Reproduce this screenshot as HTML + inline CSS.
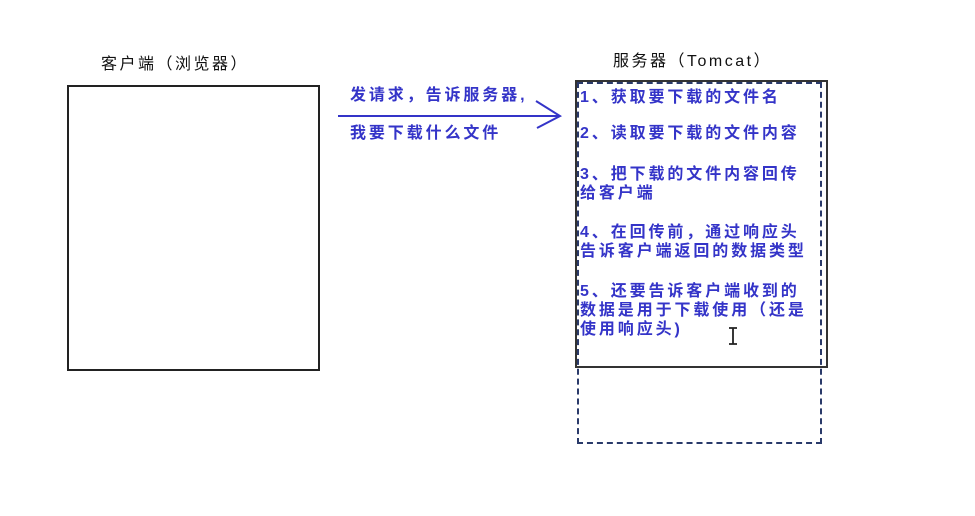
<!DOCTYPE html>
<html><head><meta charset="utf-8"><style>
body{margin:0;width:975px;height:516px;background:#fff;position:relative;overflow:hidden;font-family:"Liberation Sans","Noto Sans CJK SC",sans-serif}
div{box-sizing:border-box}
.a{position:absolute;white-space:nowrap;line-height:19px}
.b{color:#3434c8;font-size:16px;letter-spacing:2.9px;font-weight:bold}
.k{color:#111;font-size:16px;letter-spacing:2.5px}
</style></head><body>
<div class="a k" style="left:101px;top:55px">客户端（浏览器）</div>
<div class="a k" style="left:613px;top:52px">服务器（Tomcat）</div>
<div style="position:absolute;left:67px;top:85px;width:253px;height:286px;border:2px solid #222"></div>
<div style="position:absolute;left:575px;top:80px;width:253px;height:288px;border:2px solid #333"></div>
<div style="position:absolute;left:577px;top:82px;width:245px;height:362px;border:2px dashed #2a3a6a"></div>
<svg style="position:absolute;left:0;top:0" width="975" height="516">
<path d="M338 116 H560 M536 101 L560 116 L537 128" stroke="#3434c8" stroke-width="2" fill="none"/>
<path d="M733 328 V344 M729 328 H737 M729 344 H737" stroke="#222" stroke-width="1.8"/>
</svg>
<div class="a b" style="left:350px;top:86px">发请求，告诉服务器,</div>
<div class="a b" style="left:350px;top:124px">我要下载什么文件</div>
<div class="a b" style="left:580px;top:88px">1、获取要下载的文件名</div>
<div class="a b" style="left:580px;top:124px">2、读取要下载的文件内容</div>
<div class="a b" style="left:580px;top:165px">3、把下载的文件内容回传</div>
<div class="a b" style="left:580px;top:184px">给客户端</div>
<div class="a b" style="left:580px;top:223px">4、在回传前，通过响应头</div>
<div class="a b" style="left:580px;top:242px">告诉客户端返回的数据类型</div>
<div class="a b" style="left:580px;top:282px">5、还要告诉客户端收到的</div>
<div class="a b" style="left:580px;top:301px">数据是用于下载使用（还是</div>
<div class="a b" style="left:580px;top:320px">使用响应头)</div>
</body></html>
